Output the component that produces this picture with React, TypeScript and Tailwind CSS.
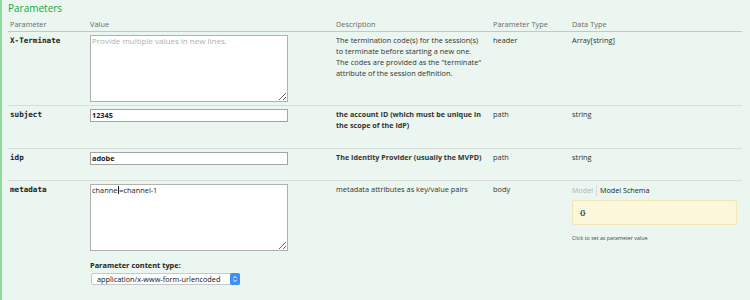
import React from "react";

type Row = {
  name: string;
  description: React.ReactNode;
  bold?: boolean;
  paramType: string;
  dataType: React.ReactNode;
  value: React.ReactNode;
  last?: boolean;
};

const sans = "font-['Open_Sans','Liberation_Sans',sans-serif]";
const mono = "font-['DejaVu_Sans_Mono','Liberation_Mono',monospace]";

function TextInput({ value }: { value: string }) {
  return (
    <div className="w-[198px] h-[13px] bg-white border border-[#a3a3a3] px-[1px] text-[7.3px] leading-[11px] font-bold text-[#222]">
      {value}
    </div>
  );
}

function ModelSchema() {
  return (
    <div className="w-[165px]">
      <div className="flex items-center text-[7.2px] leading-[11px] mt-[1px]">
        <span className="text-[#b4b4b4] pr-[3px] border-r border-[#d8dcd9]">Model</span>
        <span className="text-[#222] pl-[3px]">Model Schema</span>
      </div>
      <div className="mt-[4px] h-[25px] bg-[#fcf6db] border border-[#f2e6b4] rounded-[2px] pl-[7px] pt-[7px] text-[7px] leading-[9px] font-bold text-[#333]">
        {"{}"}
      </div>
      <div className="mt-[9px] text-[5.3px] leading-[8px] text-[#444]">Click to set as parameter value</div>
    </div>
  );
}

export default function App() {
  const rows: Row[] = [
    {
      name: "X-Terminate",
      description:
        'The termination code(s) for the session(s) to terminate before starting a new one. The codes are provided as the "terminate" attribute of the session definition.',
      paramType: "header",
      dataType: "Array[string]",
      value: (
        <textarea
          readOnly
          placeholder="Provide multiple values in new lines."
          className="block w-[198px] h-[67px] bg-white border border-[#b1b1b1] px-[1px] py-0 text-[7.3px] leading-[10px] text-[#222] placeholder:text-[#b0b0b0] placeholder:text-[8px] outline-none"
        />
      ),
    },
    {
      name: "subject",
      description: "the account ID (which must be unique in the scope of the IdP)",
      bold: true,
      paramType: "path",
      dataType: "string",
      value: <TextInput value="12345" />,
    },
    {
      name: "idp",
      description: "The Identity Provider (usually the MVPD)",
      bold: true,
      paramType: "path",
      dataType: "string",
      value: <TextInput value="adobe" />,
    },
    {
      name: "metadata",
      description: "metadata attributes as key/value pairs",
      paramType: "body",
      dataType: <ModelSchema />,
      last: true,
      value: (
        <div className="pb-[30px]">
          <div className="relative w-[198px]">
            <textarea
              readOnly
              defaultValue="channel=channel-1"
              className="block w-[198px] h-[67px] bg-white border border-[#b1b1b1] px-[1px] py-0 text-[7.4px] leading-[10px] text-[#222] outline-none"
            />
            <span className="absolute left-[28px] top-[2px] w-[1px] h-[8px] bg-[#222]" />
          </div>
          <div className="mt-[9px] text-[7.4px] leading-[10px] font-bold text-[#222]">Parameter content type:</div>
          <div className="mt-[3px] ml-[1px] w-[149px] h-[12px] flex items-center bg-white border border-[#c8c8c8] rounded-[2px]">
            <span className="flex-1 pl-[5px] text-[7.3px] leading-[10px] text-[#111]">
              application/x-www-form-urlencoded
            </span>
            <span className="w-[10px] h-[12px] -mr-[1px] rounded-[2px] bg-[#3d8ef5] flex items-center justify-center">
              <svg width="6" height="8" viewBox="0 0 6 8" fill="none" stroke="white" strokeWidth="1">
                <path d="M1.2 3.2 L3 1.4 L4.8 3.2" />
                <path d="M1.2 4.8 L3 6.6 L4.8 4.8" />
              </svg>
            </span>
          </div>
        </div>
      ),
    },
  ];

  return (
    <div className={`w-[750px] h-[300px] overflow-hidden bg-[#eaf6ef] border-l-2 border-[#8edb9e] pl-[6px] ${sans}`}>
      <h4 className="text-[#14a84b] text-[10px] leading-[14px] pt-[1px]">Parameters</h4>
      <table className="table-fixed border-collapse w-[734px] mt-[1px]">
        <thead>
          <tr className="border-b border-[#c3c7c5] text-[#6b6b6b] text-[7.4px] leading-[10px] text-left">
            <th className="w-[80px] font-normal px-[2px] pt-[3px] pb-[2px]">Parameter</th>
            <th className="w-[246px] font-normal px-[2px] pt-[3px] pb-[2px]">Value</th>
            <th className="w-[157px] font-normal px-[2px] pt-[3px] pb-[2px]">Description</th>
            <th className="w-[79px] font-normal px-[2px] pt-[3px] pb-[2px]">Parameter Type</th>
            <th className="font-normal px-[2px] pt-[3px] pb-[2px]">Data Type</th>
          </tr>
        </thead>
        <tbody>
          {rows.map((r) => (
            <tr key={r.name} className={`align-top ${r.last ? "" : "border-b border-[#d6ddd9]"}`}>
              <td className={`px-[2px] pt-[3px] pb-[3px] text-[7.6px] leading-[11px] font-bold text-[#222] ${mono}`}>
                {r.name}
              </td>
              <td className="px-[2px] pt-[3px] pb-[3px]">{r.value}</td>
              <td className="pl-[2px] pr-[9px] pt-[3px] pb-[3px]">
                <p
                  className={`leading-[11px] text-[#333] mb-[14px] ${
                    r.bold ? "font-bold text-[7.2px]" : "text-[7.4px]"
                  }`}
                >
                  {r.description}
                </p>
              </td>
              <td className="px-[2px] pt-[3px] pb-[3px] text-[7.4px] leading-[11px] text-[#333]">{r.paramType}</td>
              <td className="px-[2px] pt-[3px] pb-[3px] text-[7.4px] leading-[11px] text-[#333]">{r.dataType}</td>
            </tr>
          ))}
        </tbody>
      </table>
    </div>
  );
}
